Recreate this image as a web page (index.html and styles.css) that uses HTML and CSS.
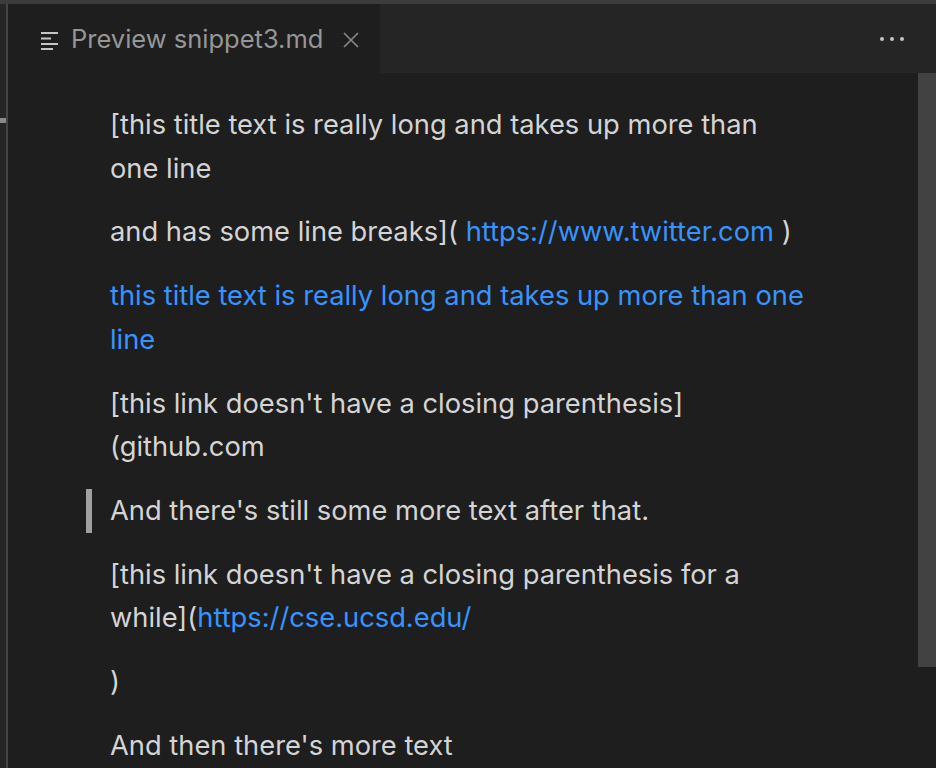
FILE: index.html
```html
<!DOCTYPE html>
<html>
<head>
<meta charset="utf-8">
<link rel="stylesheet" href="styles.css">
</head>
<body>
<div class="window">
  <div class="sidebar">
    <div class="side-thumb"></div>
  </div>
  <div class="editor">
    <div class="tabbar">
      <div class="tab">
        <svg class="tab-icon" width="18" height="20" viewBox="0 0 18 20">
          <rect x="0" y="2" width="17" height="2" fill="#c5c5c5"/>
          <rect x="0" y="7.5" width="10" height="2" fill="#c5c5c5"/>
          <rect x="0" y="13" width="17" height="2" fill="#c5c5c5"/>
          <rect x="0" y="18" width="12" height="2" fill="#c5c5c5"/>
        </svg>
        <span class="tab-title">Preview snippet3.md</span>
        <svg class="tab-close" width="18" height="18" viewBox="0 0 18 18">
          <path d="M2 2 L16 16 M16 2 L2 16" stroke="#8a8a8a" stroke-width="1.6"/>
        </svg>
      </div>
      <div class="tab-fill">
        <span class="more"><i></i><i></i><i></i></span>
      </div>
    </div>
    <div class="content-area">
      <div class="preview">
        <p>[this title text is really long and takes up more than one line</p>
        <p>and has some line breaks]( <a>https://www.twitter.com</a> )</p>
        <p><a>this title text is really long and takes up more than one line</a></p>
        <p>[this link doesn't have a closing parenthesis](github.com</p>
        <blockquote><p>And there's still some more text after that.</p></blockquote>
        <p>[this link doesn't have a closing parenthesis for a <span class="nobr">while](<a>https://cse.ucsd.edu/</a></span></p>
        <p>)</p>
        <p>And then there's more text</p>
      </div>
      <div class="scrollbar"><div class="scroll-thumb"></div></div>
    </div>
  </div>
</div>
</body>
</html>
```
FILE: styles.css
```css
html, body {
  margin: 0;
  padding: 0;
  background: #1e1e1e;
  overflow: hidden;
}
.window {
  width: 936px;
  height: 768px;
  display: flex;
  border-top: 4px solid #3c3c3c;
  box-sizing: border-box;
  font-family: Inter, "Noto Sans", sans-serif;
}
.sidebar {
  width: 6px;
  background: #252526;
  border-right: 2px solid #444444;
  position: relative;
  flex: none;
}
.side-thumb {
  position: absolute;
  left: 0;
  top: 114px;
  width: 6px;
  height: 5px;
  background: #8a8a8a;
}
.editor {
  flex: 1;
  display: flex;
  flex-direction: column;
  min-width: 0;
}
.tabbar {
  height: 69px;
  display: flex;
  flex: none;
}
.tab {
  width: 372px;
  background: #1e1e1e;
  display: flex;
  align-items: center;
  padding-left: 33px;
  box-sizing: border-box;
}
.tab-icon {
  flex: none;
  margin-top: 2px;
}
.tab-title {
  margin-left: 12px;
  font-size: 25.5px;
  color: #969696;
}
.tab-close {
  margin-left: 19px;
  margin-top: 2px;
}
.tab-fill {
  flex: 1;
  background: #252526;
  display: flex;
  align-items: center;
  justify-content: flex-end;
  padding-right: 32px;
}
.more {
  display: flex;
  gap: 6px;
  margin-top: 1px;
}
.more i {
  width: 4px;
  height: 4px;
  border-radius: 50%;
  background: #c5c5c5;
}
.content-area {
  flex: 1;
  display: flex;
  min-height: 0;
}
.preview {
  flex: none;
  width: 700px;
  padding: 30px 0 0 102px;
  color: #d4d4d4;
  font-size: 27.3px;
  line-height: 43.7px;
}
.preview p {
  margin: 0 0 20px 0;
}
.preview a {
  color: #3794ff;
  text-decoration: none;
}
.nobr {
  white-space: nowrap;
}
blockquote {
  margin: 0 0 20px -24px;
  padding-left: 18px;
  border-left: 6px solid #a0a0a0;
}
blockquote p {
  margin: 0 !important;
}
.scrollbar {
  width: 18px;
  flex: none;
  margin-left: auto;
}
.scroll-thumb {
  height: 594px;
  background: #424242;
}
```
